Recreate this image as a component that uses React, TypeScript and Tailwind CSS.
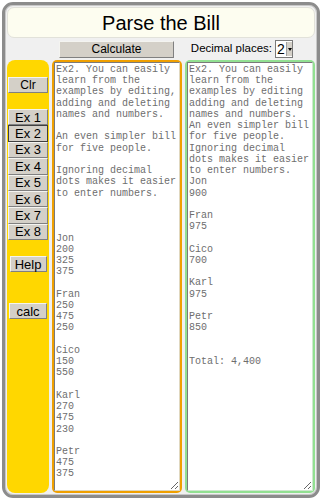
import React from "react";

const leftText = `Ex2. You can easily
learn from the
examples by editing,
adding and deleting
names and numbers.

An even simpler bill
for five people.

Ignoring decimal
dots makes it easier
to enter numbers.



Jon
200
325
375

Fran
250
475
250

Cico
150
550

Karl
270
475
230

Petr
475
375`;

const rightText = `Ex2. You can easily
learn from the
examples by editing
adding and deleting
names and numbers.
An even simpler bill
for five people.
Ignoring decimal
dots makes it easier
to enter numbers.
Jon
900

Fran
975

Cico
700

Karl
975

Petr
850


Total: 4,400`;

const examples = ["Ex 1", "Ex 2", "Ex 3", "Ex 4", "Ex 5", "Ex 6", "Ex 7", "Ex 8"];

const btn =
  "bg-[#d4d0c8] border border-t-[#f4f4f0] border-l-[#f4f4f0] border-b-[#808080] border-r-[#808080] text-black leading-none flex items-center justify-center";

function SideButton({ label, selected, className }: { label: string; selected?: boolean; className: string }) {
  return (
    <div
      className={`${btn} ${className} ${
        selected ? "!border-[#404040]" : ""
      }`}
    >
      {label}
    </div>
  );
}

export default function App() {
  return (
    <div className="w-[322px] h-[500px] bg-white p-[2px] font-['Liberation_Sans',Arial,sans-serif]">
      <div className="h-[496px] border-[3px] border-[#8c8c8c] rounded-[11px] bg-[#f0f0f0] p-[2px] flex flex-col shadow-[inset_0_0_0_1px_#c8c8c8]">
        {/* Title */}
        <div className="h-[31px] shrink-0 bg-[#fdfdf0] border border-[#e2e2da] rounded-[7px] flex items-center justify-center text-[20px] text-black">
          Parse the Bill
        </div>

        {/* Controls */}
        <div className="h-[18px] mt-[2px] shrink-0 flex items-center">
          <div className="w-[52px]" />
          <div className={`${btn} w-[115px] h-[17px] text-[12px]`}>Calculate</div>
          <div className="flex-1" />
          <span className="text-[11.5px] text-black">Decimal places:</span>
          <div className="ml-[3px] mr-[22px] w-[18px] h-[18px] bg-white border border-[#7a7a7a] flex items-center">
            <span className="text-[14px] leading-none pl-[1px] w-[10px]">2</span>
            <div className="w-[6px] h-[14px] bg-[#d4d0c8] border-l border-[#a0a0a0] flex items-center justify-center">
              <svg width="4" height="3" viewBox="0 0 4 3">
                <path d="M0 0h4L2 3z" fill="#000" />
              </svg>
            </div>
          </div>
        </div>

        {/* Main */}
        <div className="mt-[2px] flex-1 flex gap-[3px] min-h-0">
          {/* Sidebar */}
          <div className="w-[42px] shrink-0 bg-[#ffd700] rounded-[8px] flex flex-col items-center pt-[17px]">
            <SideButton label="Clr" className="w-[40px] h-[16px] text-[12px]" />
            <div className="h-[16px]" />
            {examples.map((ex) => (
              <SideButton
                key={ex}
                label={ex}
                selected={ex === "Ex 2"}
                className="w-[40px] h-[16.4px] text-[13px]"
              />
            ))}
            <div className="h-[16px]" />
            <SideButton label="Help" className="w-[37px] h-[16px] text-[13px]" />
            <div className="h-[31px]" />
            <SideButton label="calc" className="w-[38px] h-[16px] text-[13px]" />
          </div>

          {/* Input */}
          <div className="w-[130px] shrink-0 bg-[#f0a000] rounded-[5px] p-[2px] flex">
            <textarea
              readOnly
              value={leftText}
              className="flex-1 resize-y overflow-hidden bg-white border border-t-[#7a7a7a] border-l-[#7a7a7a] border-b-[#e0d8c0] border-r-[#e0d8c0] p-[1px] font-['Liberation_Mono','Courier_New',monospace] text-[10px] leading-[11.24px] text-[#6e6e6e] outline-none whitespace-pre"
            />
          </div>

          {/* Output */}
          <div className="flex-1 bg-[#92e092] rounded-[5px] p-[2px] flex">
            <textarea
              readOnly
              value={rightText}
              className="flex-1 resize-y overflow-hidden bg-white border border-t-[#7a7a7a] border-l-[#7a7a7a] border-b-[#d0e8d0] border-r-[#d0e8d0] p-[1px] font-['Liberation_Mono','Courier_New',monospace] text-[10px] leading-[11.24px] text-[#6e6e6e] outline-none whitespace-pre"
            />
          </div>
        </div>
      </div>
    </div>
  );
}
